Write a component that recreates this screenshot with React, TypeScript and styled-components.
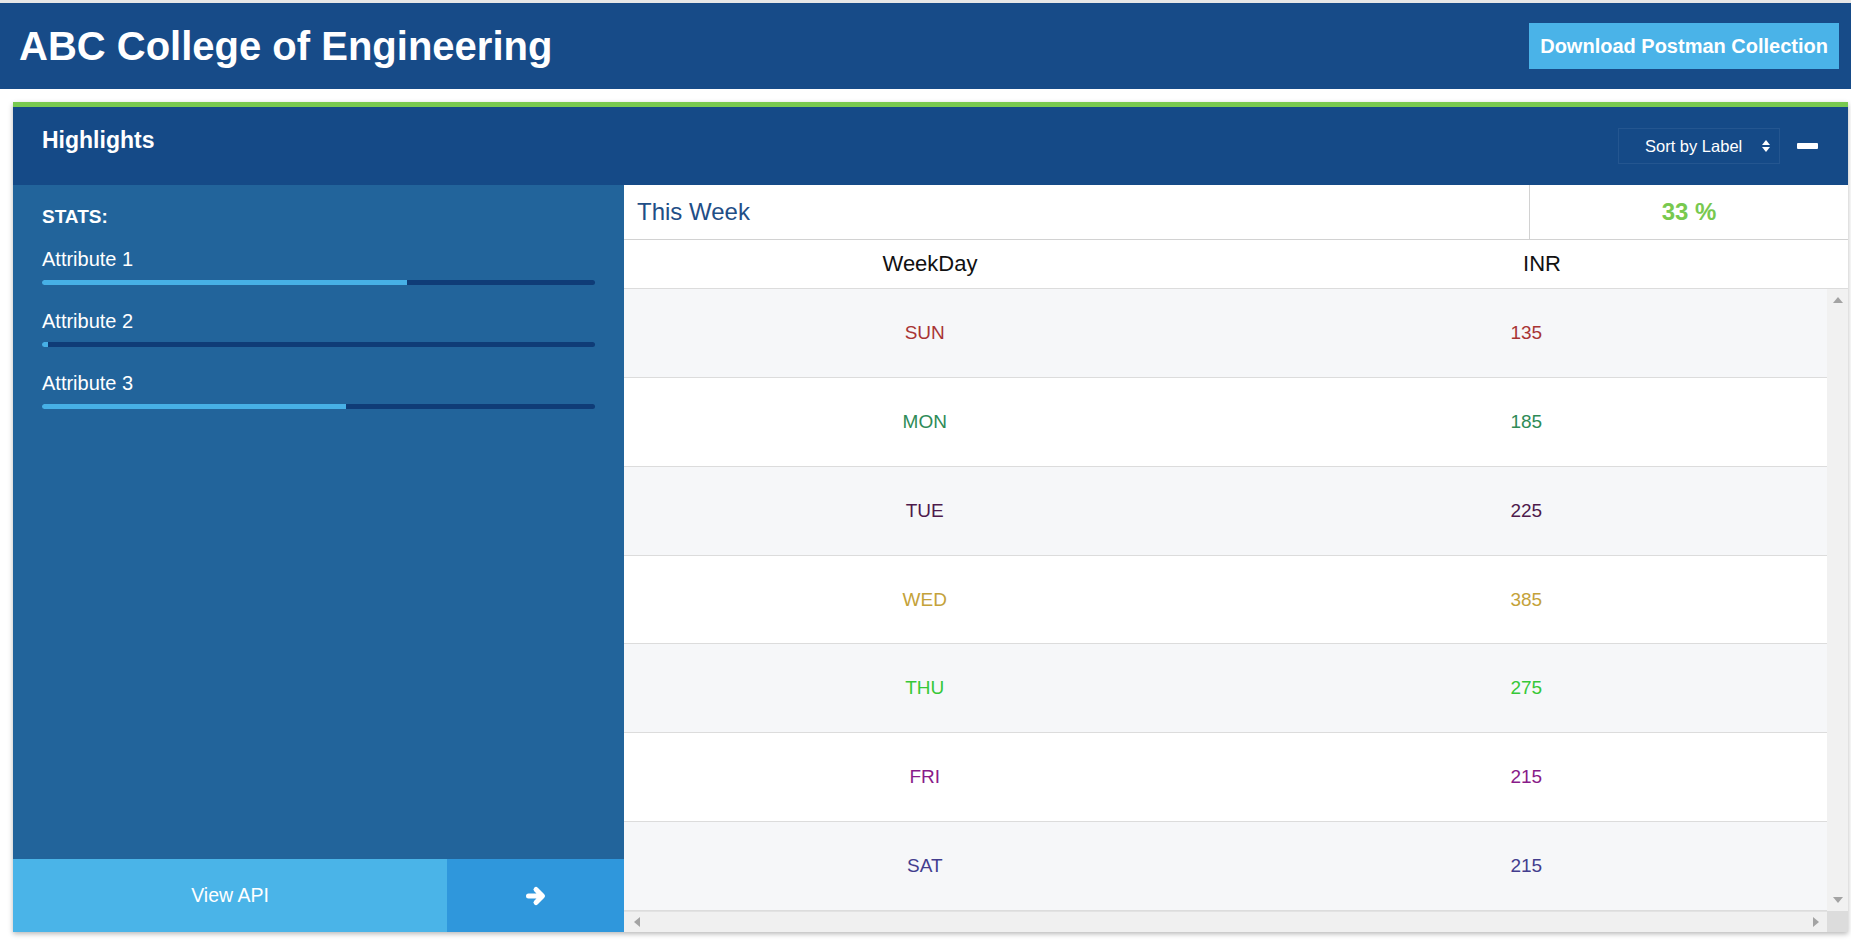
import React from "react";
import styled, { createGlobalStyle } from "styled-components";

const GlobalStyle = createGlobalStyle`
  html, body { margin: 0; padding: 0; background: #ffffff; }
  body { font-family: "Liberation Sans", Arial, sans-serif; }
  * { box-sizing: border-box; }
`;

const Page = styled.div`
  border-top: 3px solid #e7e7e7;
  width: 1851px;
  height: 941px;
  display: flex;
  flex-direction: column;
`;

const TopBar = styled.header`
  height: 86px;
  background: #174b88;
  display: flex;
  align-items: center;
  justify-content: space-between;
  padding: 0 12px 0 19px;
`;

const Title = styled.h1`
  margin: 0;
  color: #ffffff;
  font-size: 40px;
  font-weight: 700;
  line-height: 46px;
  margin-top: -1px;
`;

const DownloadButton = styled.button`
  height: 46px;
  padding: 0 11px;
  border: none;
  background: #4ab3e8;
  color: #ffffff;
  font-family: "Liberation Sans", Arial, sans-serif;
  font-size: 20px;
  font-weight: 700;
  cursor: pointer;
`;

const Main = styled.main`
  padding: 13px 3px 0 13px;
`;

const Panel = styled.section`
  height: 830px;
  border-top: 5px solid #78c94f;
  box-shadow: 0 2px 5px rgba(0, 0, 0, 0.28);
  display: flex;
  flex-direction: column;
`;

const PanelHeader = styled.div`
  height: 78px;
  flex-shrink: 0;
  background: #154a87;
  display: flex;
  align-items: flex-start;
  justify-content: space-between;
  padding: 20px 30px 0 29px;
`;

const PanelTitle = styled.h2`
  margin: 0;
  color: #ffffff;
  font-size: 23px;
  font-weight: 700;
  line-height: 26px;
`;

const Controls = styled.div`
  display: flex;
  align-items: center;
  gap: 17px;
  margin-top: 1px;
`;

const SortSelect = styled.div`
  width: 162px;
  height: 36px;
  border: 1px solid #245690;
  display: flex;
  align-items: center;
  justify-content: space-between;
  padding: 0 9px 0 26px;
  color: #ffffff;
  font-size: 16.5px;
`;

const MinusIcon = styled.span`
  display: block;
  width: 21px;
  height: 6px;
  border-radius: 1px;
  background: #ffffff;
`;

const Body = styled.div`
  flex: 1;
  display: flex;
  min-height: 0;
`;

const Sidebar = styled.aside`
  width: 611px;
  flex-shrink: 0;
  background: #22649b;
  display: flex;
  flex-direction: column;
`;

const StatsArea = styled.div`
  flex: 1;
  padding: 21px 29px 0 29px;
`;

const StatsTitle = styled.div`
  color: #ffffff;
  font-size: 19px;
  font-weight: 700;
  line-height: 22px;
  margin-bottom: 20px;
`;

const StatList = styled.div`
  display: flex;
  flex-direction: column;
  gap: 25px;
`;

const StatItem = styled.div`
  display: flex;
  flex-direction: column;
  gap: 9px;
`;

const StatLabel = styled.div`
  color: #ffffff;
  font-size: 20px;
  line-height: 23px;
`;

const Track = styled.div`
  height: 5px;
  border-radius: 3px;
  background: #0f3c77;
  overflow: hidden;
`;

const Fill = styled.div`
  height: 100%;
  background: #47b0e6;
`;

const SidebarFooter = styled.div`
  height: 73px;
  display: flex;
`;

const ViewApi = styled.div`
  flex: 1;
  background: #4ab4e8;
  color: #ffffff;
  font-size: 19.5px;
  display: flex;
  align-items: center;
  justify-content: center;
`;

const ArrowBox = styled.div`
  width: 177px;
  background: #2f97dc;
  display: flex;
  align-items: center;
  justify-content: center;
`;

const Content = styled.div`
  flex: 1;
  display: flex;
  flex-direction: column;
  background: #ffffff;
  min-width: 0;
`;

const WeekRow = styled.div`
  height: 55px;
  flex-shrink: 0;
  display: grid;
  grid-template-columns: 1fr 319px;
  border-bottom: 1px solid #d2d2d2;
`;

const WeekTitle = styled.div`
  display: flex;
  align-items: center;
  padding-left: 13px;
  color: #1f4e87;
  font-size: 24px;
`;

const PercentCell = styled.div`
  display: flex;
  align-items: center;
  justify-content: center;
  border-left: 1px solid #d2d2d2;
  color: #78c94f;
  font-size: 24px;
  font-weight: 700;
`;

const HeadRow = styled.div`
  height: 49px;
  flex-shrink: 0;
  display: grid;
  grid-template-columns: 1fr 1fr;
  align-items: center;
  border-bottom: 1px solid #dcdcdc;
  color: #111111;
  font-size: 22px;
  text-align: center;
`;

const ScrollArea = styled.div`
  flex: 1;
  display: grid;
  grid-template-columns: 1fr 21px;
  grid-template-rows: 1fr 21px;
  min-height: 0;
`;

const Rows = styled.div`
  display: flex;
  flex-direction: column;
`;

const Row = styled.div<{ $alt: boolean }>`
  flex: 1;
  display: grid;
  grid-template-columns: 1fr 1fr;
  align-items: center;
  text-align: center;
  font-size: 19px;
  background: ${(p) => (p.$alt ? "#f6f7f9" : "#ffffff")};
  border-bottom: 1px solid #dcdcdc;
`;

const Cell = styled.div<{ $color: string }>`
  color: ${(p) => p.$color};
`;

const VScroll = styled.div`
  background: #f1f1f1;
  display: flex;
  flex-direction: column;
  justify-content: space-between;
  align-items: center;
  padding: 8px 0;
`;

const HScroll = styled.div`
  background: #f0f0f0;
  border-top: 1px solid #e2e2e2;
  display: flex;
  justify-content: space-between;
  align-items: center;
  padding: 0 8px 0 10px;
`;

const Corner = styled.div`
  background: #dcdcdc;
`;

const Tri = ({ dir }: { dir: "up" | "down" | "left" | "right" }) => {
  const pts = {
    up: "0,6 5,0 10,6",
    down: "0,0 10,0 5,6",
    left: "6,0 6,10 0,5",
    right: "0,0 0,10 6,5",
  }[dir];
  const vertical = dir === "up" || dir === "down";
  return (
    <svg width={vertical ? 10 : 6} height={vertical ? 6 : 10} viewBox={vertical ? "0 0 10 6" : "0 0 6 10"}>
      <polygon points={pts} fill="#a3a3a3" />
    </svg>
  );
};

const SortArrows = () => (
  <svg width="8" height="12" viewBox="0 0 8 12">
    <polygon points="0,5 4,0 8,5" fill="#ffffff" />
    <polygon points="0,7 8,7 4,12" fill="#ffffff" />
  </svg>
);

const ArrowIcon = () => (
  <svg width="22" height="22" viewBox="0 0 22 22">
    <path
      d="M3.5 11 H15.5 M11 4.5 L17.5 11 L11 17.5"
      fill="none"
      stroke="#ffffff"
      strokeWidth="5"
      strokeLinecap="round"
      strokeLinejoin="round"
    />
  </svg>
);

const stats = [
  { label: "Attribute 1", value: 66 },
  { label: "Attribute 2", value: 1 },
  { label: "Attribute 3", value: 55 },
];

const days = [
  { day: "SUN", inr: 135, color: "#a83434" },
  { day: "MON", inr: 185, color: "#2e8b57" },
  { day: "TUE", inr: 225, color: "#4e1a4c" },
  { day: "WED", inr: 385, color: "#c4a23a" },
  { day: "THU", inr: 275, color: "#36c838" },
  { day: "FRI", inr: 215, color: "#891b89" },
  { day: "SAT", inr: 215, color: "#433d8e" },
];

export default function App() {
  return (
    <>
      <GlobalStyle />
      <Page>
        <TopBar>
          <Title>ABC College of Engineering</Title>
          <DownloadButton>Download Postman Collection</DownloadButton>
        </TopBar>
        <Main>
          <Panel>
            <PanelHeader>
              <PanelTitle>Highlights</PanelTitle>
              <Controls>
                <SortSelect>
                  <span>Sort by Label</span>
                  <SortArrows />
                </SortSelect>
                <MinusIcon />
              </Controls>
            </PanelHeader>
            <Body>
              <Sidebar>
                <StatsArea>
                  <StatsTitle>STATS:</StatsTitle>
                  <StatList>
                    {stats.map((s) => (
                      <StatItem key={s.label}>
                        <StatLabel>{s.label}</StatLabel>
                        <Track>
                          <Fill style={{ width: `${s.value}%` }} />
                        </Track>
                      </StatItem>
                    ))}
                  </StatList>
                </StatsArea>
                <SidebarFooter>
                  <ViewApi>View API</ViewApi>
                  <ArrowBox>
                    <ArrowIcon />
                  </ArrowBox>
                </SidebarFooter>
              </Sidebar>
              <Content>
                <WeekRow>
                  <WeekTitle>This Week</WeekTitle>
                  <PercentCell>33 %</PercentCell>
                </WeekRow>
                <HeadRow>
                  <div>WeekDay</div>
                  <div>INR</div>
                </HeadRow>
                <ScrollArea>
                  <Rows>
                    {days.map((d, i) => (
                      <Row key={d.day} $alt={i % 2 === 0}>
                        <Cell $color={d.color}>{d.day}</Cell>
                        <Cell $color={d.color}>{d.inr}</Cell>
                      </Row>
                    ))}
                  </Rows>
                  <VScroll>
                    <Tri dir="up" />
                    <Tri dir="down" />
                  </VScroll>
                  <HScroll>
                    <Tri dir="left" />
                    <Tri dir="right" />
                  </HScroll>
                  <Corner />
                </ScrollArea>
              </Content>
            </Body>
          </Panel>
        </Main>
      </Page>
    </>
  );
}
